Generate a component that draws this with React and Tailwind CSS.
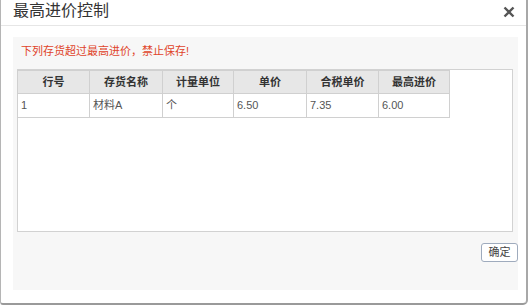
export default function App() {
  const cols = ["行号", "存货名称", "计量单位", "单价", "合税单价", "最高进价"];
  const row = ["1", "材料A", "个", "6.50", "7.35", "6.00"];
  const widths = ["w-[72px]", "w-[73px]", "w-[71px]", "w-[73px]", "w-[72px]", "w-[71px]"];
  return (
    <div
      className="w-[531px] h-[307px] bg-white overflow-hidden"
      style={{ fontFamily: '"Liberation Sans", "Noto Sans CJK SC", sans-serif' }}
    >
      <div className="w-[528px] h-[305px] bg-white border-l border-l-[#b5b5b5] border-r-2 border-r-[#a8a8a8] border-b-2 border-b-[#9a9a9a] rounded-br-[5px] rounded-bl-[3px] flex flex-col">
        <div className="h-[26px] border-b border-[#e6e6e6] flex items-center justify-between pl-[12px] pr-[11px] shrink-0">
          <span className="text-[16px] leading-[20px] text-[#333] mt-[-3px]">最高进价控制</span>
          <svg width="12" height="12" viewBox="0 0 12 12" className="mt-[-2px]">
            <path d="M1.5 1.5 L10.5 10.5 M10.5 1.5 L1.5 10.5" stroke="#555" strokeWidth="2.4" strokeLinecap="butt" />
          </svg>
        </div>
        <div className="ml-[12px] mt-[11px] w-[505px] h-[253px] bg-[#f7f7f7] pl-[4px] pr-[5px] pt-[6px] flex flex-col">
          <div className="text-[11px] leading-[16px] text-[#e0442a] pl-[4px] mb-[10px]">下列存货超过最高进价，禁止保存!</div>
          <div className="w-[496px] h-[163px] bg-white border border-[#d2d2d2]">
            <table className="border-collapse mt-[0px] ml-[-1px]">
              <thead>
                <tr className="h-[23px] bg-[#e7e7e7]">
                  {cols.map((c, i) => (
                    <th
                      key={c}
                      className={`${widths[i]} border border-[#d0d0d0] text-[11px] font-bold text-[#333] text-center p-0`}
                    >
                      {c}
                    </th>
                  ))}
                </tr>
              </thead>
              <tbody>
                <tr className="h-[24px]">
                  {row.map((c, i) => (
                    <td
                      key={i}
                      className={`${widths[i]} border border-[#d0d0d0] text-[11px] text-[#555] text-left pl-[3px] p-0`}
                    >
                      {c}
                    </td>
                  ))}
                </tr>
              </tbody>
            </table>
          </div>
          <div className="flex justify-end mt-[11px] mr-[-5px]">
            <button className="w-[37px] h-[19px] border border-[#9fabbd] rounded-[3px] bg-white text-[11px] leading-[17px] text-[#444] p-0">
              确定
            </button>
          </div>
        </div>
      </div>
    </div>
  );
}
